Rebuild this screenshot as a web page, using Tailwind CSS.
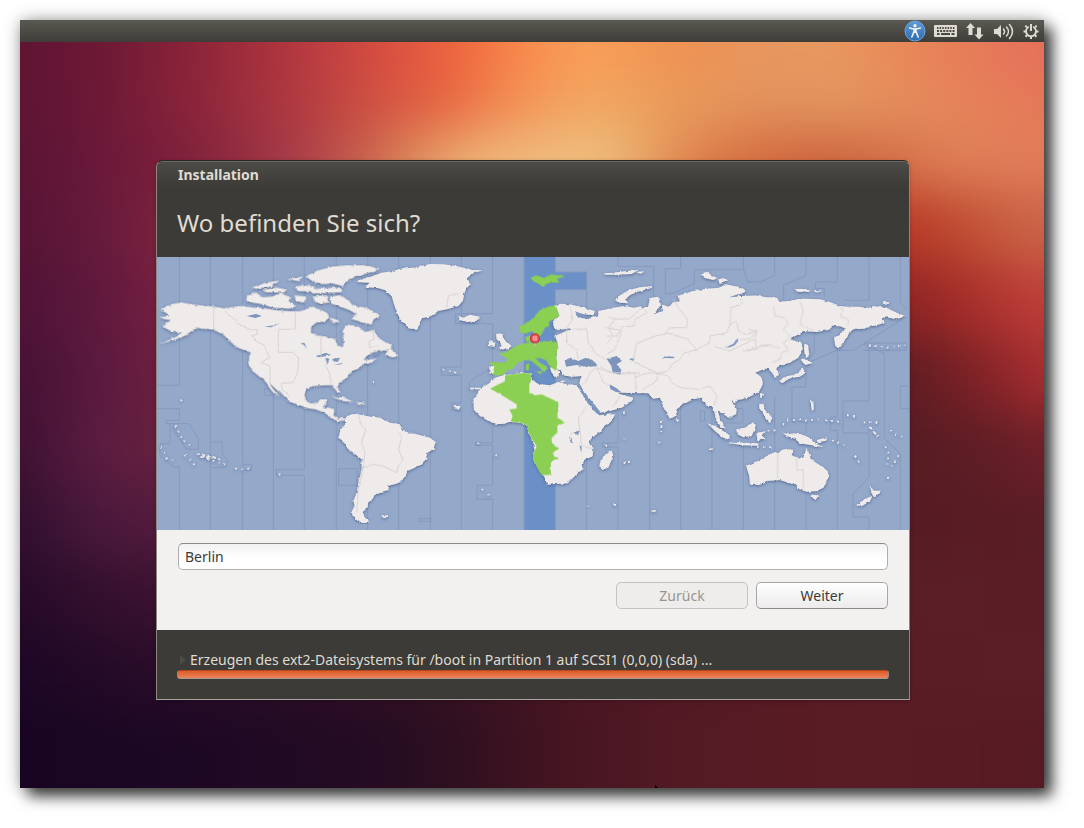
<!DOCTYPE html>
<html lang="de">
<head>
<meta charset="utf-8">
<meta name="viewport" content="width=device-width, initial-scale=1">
<title>Installation</title>
<script src="https://cdn.jsdelivr.net/npm/@tailwindcss/browser@4"></script>
</head>
<body class="flex min-h-screen bg-white pt-5 pr-10 pb-10 pl-5 font-['Noto_Sans',sans-serif] text-sm">
<div class="relative isolate flex flex-1 flex-col shadow-[8px_8px_14px_rgba(0,0,0,0.75),0_0_16px_rgba(0,0,0,0.3)]">

  <!-- wallpaper: soft colour bands blended into each other -->
  <div class="absolute inset-0 -z-10 overflow-hidden bg-[#5a1c24]" aria-hidden="true">
    <div class="absolute -inset-x-0 -top-12 -bottom-12 flex flex-col blur-[24px]">
      <div class="-mx-12 h-[110px] bg-[linear-gradient(90deg,#5f1433_4%,#6b1835_11%,#8c2439_20%,#b33840_29%,#dd5240_38%,#f0683f_44%,#f88a4c_49%,#f9a05a_55%,#ee9252_63%,#e89660_71%,#e8985f_77%,#e88858_83%,#e5725a_94%)]"></div>
      <div class="-mx-12 h-[50px] bg-[linear-gradient(90deg,#5e1434_4%,#6b1836_11%,#8c243b_20%,#b03a40_29%,#d85843_38%,#e86a43_43%,#f18a52_47%,#f3a461_53%,#f0a863_56%,#e99a5b_63%,#e1905e_72%,#e39560_78%,#e5865a_87%,#e57858_96%)]"></div>
      <div class="-mx-12 h-[60px] bg-[linear-gradient(90deg,#5a1434_4%,#69183a_11%,#80213b_20%,#a83c4a_29%,#c8604c_35%,#e0925f_40%,#efb478_45%,#efbe80_53%,#eebe7c_57%,#e39458_62%,#d97545_67%,#cf673f_74%,#cd6840_79%,#d6724a_83%,#de8058_88%,#e27c5b_96%)]"></div>
      <div class="-mx-12 flex-1 bg-[linear-gradient(90deg,#561334_4%,#641a3b_11%,#7d203e_17%,#a84048_28%,#d8805c_36%,#efc08a_45%,#eeb878_54%,#d9703f_62%,#c0442a_72%,#b83a28_84%,#bf4a30_88%,#c65c3e_92%,#cc664a_96%)]"></div>
      <div class="-mx-12 flex-1 bg-[linear-gradient(90deg,#4e1235_4%,#601a3e_12%,#7a2040_18%,#9c3548_30%,#c05040_50%,#8a2424_75%,#8e2425_84%,#a32c28_88%,#b23531_92%,#c0403a_96%)]"></div>
      <div class="-mx-12 flex-1 bg-[linear-gradient(90deg,#451133_4%,#5c1b40_12%,#70203f_18%,#702038_50%,#5a1c22_78%,#5f1d23_84%,#701f24_87%,#8c2529_92%,#ab2f31_96%)]"></div>
      <div class="-mx-12 flex-1 bg-[linear-gradient(90deg,#3c1030_4%,#571b40_10%,#68203f_17%,#581c30_50%,#551b22_80%,#571c23_84%,#621e26_92%,#74202a_97%)]"></div>
      <div class="-mx-12 flex-1 bg-[linear-gradient(90deg,#300e2d_4%,#4a193c_11%,#541b3c_17%,#50182a_50%,#571b23_85%,#5a1d25_96%)]"></div>
      <div class="-mx-12 flex-1 bg-[linear-gradient(90deg,#250a28_4%,#3a1230_15%,#3c1028_50%,#5b1e26_84%,#5a1d25_97%)]"></div>
      <div class="-mx-12 flex-1 bg-[linear-gradient(90deg,#1c0725_4%,#280c28_15%,#2e0e26_30%,#351122_42%,#4a1622_54%,#571a24_72%,#5c1e26_96%)]"></div>
      <div class="-mx-12 h-[130px] bg-[linear-gradient(90deg,#170521_4%,#1b0724_16%,#230b23_34%,#2b0f20_42%,#451421_52%,#551b24_65%,#5a1b24_80%,#561a22_96%)]"></div>
    </div>
  </div>

  <header class="flex h-[22px] items-center justify-end gap-2 bg-linear-to-b from-[#5a5951] to-[#3e3d39] pr-[5px]">
    <button type="button" aria-label="Zugangshilfen" class="block">
      <svg class="block h-[22px] w-[22px]" viewBox="0 0 22 22"><defs><linearGradient id="acc" x2="0" y2="1"><stop stop-color="#5b9bd8"/><stop offset="1" stop-color="#2f6cb0"/></linearGradient></defs><circle cx="11" cy="11" r="10" fill="url(#acc)" stroke="#6da6da"/><g fill="none" stroke="#f1f0ec" stroke-linecap="round"><path d="M5.500 8 11 9.200 16.500 8" stroke-width="1.500"/><path d="M9.800 12 7.800 17M12.200 12l2 5" stroke-width="1.600"/></g><path d="M9.300 8.500h3.400v4.500H9.300z" fill="#f1f0ec"/><circle cx="11" cy="5.800" r="1.700" fill="#f1f0ec"/></svg>
    </button>
    <button type="button" aria-label="Tastatur" class="block">
      <svg class="block h-[22px] w-[23px]" viewBox="0 0 23 22"><rect y="5" width="23" height="12" rx="1" fill="#dfdbd2"/><g stroke="#4a4943" stroke-width="2"><path d="M3 8H20.500" stroke-dasharray="1.500 1.150"/><path d="M3 11H20.500" stroke-dasharray="2 1.100"/><path d="M3 14H5.500M7 14h9M17.500 14H20.500"/></g></svg>
    </button>
    <button type="button" aria-label="Netzwerk" class="block">
      <svg class="block h-[22px] w-[20px]" viewBox="0 0 20 22" fill="#dfdbd2"><path d="M5.500 3 10 8H7.500v7h-4V8H1zM14 19.500l4.500-5H16v-7h-4v7H9.500z"/></svg>
    </button>
    <button type="button" aria-label="Lautstärke" class="block">
      <svg class="block h-[22px] w-[22px]" viewBox="0 0 22 22"><path d="M1 9h3l4-4v13l-4-4H1z" fill="#dfdbd2"/><g fill="none" stroke="#dfdbd2" stroke-width="1.500" stroke-linecap="round"><path d="M10.500 9q2 2.500 0 5"/><path d="M13.500 7q4 4.500 0 9"/><path d="M16.500 4.500q6 7 0 14"/></g></svg>
    </button>
    <button type="button" aria-label="System" class="block">
      <svg class="block h-[22px] w-[16px]" viewBox="0 0 16 22" fill="none" stroke="#dfdbd2"><path d="M5.800 6.700a5 5 0 1 0 4.400 0" stroke-width="1.800"/><path d="M8 4v7" stroke-width="2"/><path d="m3.900 7.200-1.600-1.600M12.100 7.200l1.600-1.600M3 11.500H.5M13 11.500h2.500M4.200 15l-1.700 1.700M11.800 15l1.700 1.700M8 16.500V19" stroke-width="2"/></svg>
    </button>
  </header>

  <main class="flex flex-1 flex-col items-center justify-center pt-[30px] pr-6 pl-[26px]">
    <section aria-labelledby="question" class="flex w-full max-w-[754px] flex-col rounded-t-[7px] border border-t-[#292824] border-b-[#a8a49c] border-x-[#8c8880] bg-[#3c3b37] text-[#dfdbd2] shadow-[0_1px_4px_rgba(0,0,0,0.2)]">
      <div class="flex h-[26px] items-center rounded-t-md border-t border-[#6a6961] bg-linear-to-b from-[#4c4b46] to-[#3c3b37] px-[21px] text-sm font-bold">Installation</div>
      <h1 id="question" class="flex h-[70px] items-center px-5 pt-[2px] text-2xl font-normal">Wo befinden Sie sich?</h1>

      <svg class="block w-full" viewBox="0 0 2256 819" role="img" aria-label="Zeitzonenkarte">
        <defs>
          <filter id="coast" x="0" y="0" width="100%" height="100%"><feTurbulence type="fractalNoise" baseFrequency=".08" numOctaves="2" seed="4" result="n"/><feDisplacementMap in="SourceGraphic" in2="n" scale="9" xChannelSelector="R" yChannelSelector="G" result="d"/><feDropShadow in="d" dx="0" dy="3" stdDeviation="5" flood-color="#3f5682" flood-opacity=".8"/></filter>
          <filter id="edge" x="0" y="0" width="100%" height="100%"><feTurbulence type="fractalNoise" baseFrequency=".08" numOctaves="2" seed="4" result="n"/><feDisplacementMap in="SourceGraphic" in2="n" scale="7" xChannelSelector="R" yChannelSelector="G"/></filter>
        </defs>
        <rect width="2256" height="819" fill="#94a8ca"/>
        <path fill="#6b90c7" d="M1101 0h94v45h94v53h-94v721h-94z"/>
        <!-- time zone boundaries -->
        <g fill="none" stroke="#8799bd" stroke-width="3">
          <path d="M67 0V385H0M0 455H67V490H27V500H39V560H9V597L50 629H67V819M39 500H97L124 545V577H88L45 510M160 0V819M160 555H196V590L214 615 204 632H160M257 0V819M257 622H284V640H257M349 0V819M442 0V638H358V655H442V819M538 0V819M632 0V819M725 0V819M820 0V819M913 0V330H853V355H913V438H883V460H913V819M1007 0V170H895V200H1007V330L937 375V400M1007 340V558H955V565H1007V685H960V727H1007V819M1101 0V819M1195 0V45H1289V98H1195V819M1289 98V819M1383 0V28H1490V120M1383 400V558H1335V570H1383V819M1478 400V819M1571 0V35H1525V110H1545L1612 80V38H1760M1571 430V819M1665 430V819M1630 462H1643V492H1630ZM1759 0V35L1772 75H1812L1853 55V0M1759 560V819M1853 420V819M1947 0V55L1880 85V130M1972 200V285L1947 320V390H1905V495H1947V530M1947 700V819M2041 0V75H1975V95H2002V120M2041 270V480H2020V520H2041V819M1947 320 2040 280H2090L2230 190M2136 0V130H2060M2136 270V432H2058V528H2136V660L2088 710V780H2136V819M2120 260 2182 290V545L2230 590V819M2230 0V140L2250 160M2256 387H2230V455H2256M322 395H350V415H322ZM545 635H600V685H545ZM785 785H825V793H785ZM2120 258H2248V280H2120M1720 455H1758V498H1705"/>
        </g>

        <g filter="url(#coast)" fill="#efebea">
          <!-- North America and the Arctic islands -->
          <g transform="translate(-3 -3)">
            <path d="M12 162 42 146 75 139 110 146 172 152 203 157 240 152 262 150 290 155 330 158 360 163 400 166 432 166 450 160 470 152 490 160 512 170 520 182 508 195 480 200 466 212 464 228 482 238 520 244 538 250 545 268 560 274 563 258 562 240 560 225 572 205 607 212 627 228 652 222 667 245 687 258 707 265 705 278 682 284 652 288 632 300 622 312 647 310 662 306 647 320 622 322 612 335 582 350 572 368 552 380 544 392 552 410 544 408 534 395 527 387 500 388 470 390 450 398 445 415 450 435 465 443 485 440 492 430 512 430 505 448 500 455 520 455 535 460 532 478 545 488 567 487 567 493 545 495 530 488 505 470 480 460 455 456 430 447 400 436 390 422 370 408 350 390 338 378 350 398 370 421 352 410 335 388 325 370 310 362 290 345 278 325 280 300 285 290 265 282 245 275 225 258 205 238 190 230 172 221 140 218 120 215 100 230 75 245 40 256 5 264 40 252 65 240 78 230 60 228 45 225 25 215 20 208 35 200 45 192 30 190 10 183 40 180 30 170Z"/>
            <path d="M448 62 490 42 530 32 570 28 620 28 672 38 640 50 600 60 575 75 560 90 530 82 500 84 470 75ZM275 118 300 110 320 124 350 122 375 112 404 125 400 138 420 150 400 158 350 155 320 144 290 140 270 132ZM288 94 330 80 370 74 345 92 300 98ZM320 102 360 95 392 100 385 110 330 108ZM395 70 440 62 430 75ZM420 92 440 88 475 92 470 105 425 105ZM415 118 450 122 450 140 420 135ZM458 100 550 95 562 108 470 112ZM470 122 510 118 520 140 480 142ZM522 122 550 118 575 130 592 150 632 155 652 168 674 178 652 190 647 206 617 198 585 188 602 175 582 162 552 152 525 142ZM524 185 552 195 530 202ZM687 298 700 275 727 298 712 304ZM527 422 562 425 592 437 562 435ZM600 437 630 442 612 447Z"/>
          </g>
          <!-- Greenland, Iceland, South America -->
          <g transform="translate(519 -3)">
            <path d="M80 78 100 68 130 60 155 50 190 45 210 38 250 35 300 24 340 25 380 30 400 35 430 42 458 43 430 52 412 65 420 85 408 100 402 115 398 135 385 150 350 160 325 165 300 182 280 185 268 205 262 219 240 218 225 205 210 190 200 165 192 145 185 120 165 102 140 96 105 92 120 80ZM385 180 400 185 420 176 448 182 440 194 410 198 390 192Z"/>
            <path d="M45 490 60 475 80 474 110 480 150 485 180 500 210 505 220 525 260 535 300 545 317 558 310 580 292 590 288 610 270 628 232 645 225 665 205 682 172 690 178 702 150 708 130 720 128 732 115 738 112 755 98 768 105 785 122 799 100 802 80 792 68 780 65 765 75 752 70 735 80 710 85 680 95 640 95 610 70 590 50 575 40 555 25 545 32 520 45 510Z"/>
            <path d="M155 778h16v5h-16zM370 450h22l-6 12zM338 340h5v5h-5zM355 344h8v5h-8zM372 347h7v5h-7zM420 395h32v5h-32zM442 560h6v4h-6zM496 596h5v5h-5zM455 698h5v5h-5zM473 714h5v5h-5zM127 376h5v5h-5z"/>
          </g>
          <!-- Europe, Africa, Middle East -->
          <g transform="translate(939 -3)">
            <path d="M78 234 95 232 102 250 125 270 112 280 85 280 95 265 80 250ZM50 270 60 252 76 258 74 272ZM58 330 75 330 70 356 58 352ZM388 630 395 605 425 583 430 600 415 635 395 643ZM400 52l30-2 35-4 40-4-20 12-70 2z"/>
            <path d="M65 370 85 362 105 358 150 352 185 352 185 372 210 385 240 388 265 378 290 385 320 388 330 402 345 428 360 448 372 465 388 478 435 475 425 495 400 515 380 535 362 550 358 565 370 575 368 600 345 612 335 625 338 640 320 655 305 670 290 682 260 684 232 686 222 660 208 645 190 610 192 590 195 570 180 545 172 520 175 508 150 500 120 497 90 506 60 498 30 480 12 462 10 430 25 405 45 390 60 380Z"/>
            <path d="M255 147 275 143 300 145 340 155 375 165 370 178 345 175 330 182 355 190 385 178 395 165 440 160 480 158 515 150V412L470 410 445 398 425 388 430 400 450 415 490 425 478 440 455 455 420 465 388 470 375 450 355 425 338 400 328 382 335 360 305 362 280 358 268 340 258 335 268 348 260 366 245 350 240 335 258 320 262 258 255 240 300 220 262 222 250 210 250 195 268 180 262 162Z"/>
            <path d="M460 466h7v5h-7zM403 566h6v4h-6zM461 545h6v5h-6zM461 619h6v5h-6zM474 615h6v5h-6zM350 749h8v4h-8zM430 744h8v5h-8zM270 376l18-2-12 6z"/>
          </g>
          <!-- Russia, central and southern Asia -->
          <g transform="translate(1329 -3)">
            <path d="M-5 165 40 155 75 150 100 155 125 158 145 150 150 125 175 122 180 150 162 174 190 165 185 145 205 152 215 140 240 136 232 120 280 105 320 98 360 95 375 85 415 92 440 105 410 120 450 120 515 125V336L495 338 465 350 480 360 488 375 485 395 465 415 440 425 415 430 395 434 400 445 410 460 408 475 385 485 365 470 353 462 360 490 377 517 365 515 350 495 342 465 335 450 320 450 305 425 280 430 250 445 230 460 226 480 210 490 200 470 185 440 180 425 160 428 145 412 110 410 80 410 50 410-5 408Z"/>
            <path d="M48 135 60 118 85 103 120 94 155 90 155 96 120 105 92 116 75 130 85 142 60 140ZM300 58 320 47 335 58 352 66 340 72 315 66ZM350 72 370 66 385 73 360 80ZM10 54l18-3-4 6zM36 52l20-2 6 5-16 3zM70 50l22-4 2 6-18 3zM108 48l26-2-12 7zM227 485 238 494 232 502ZM398 432 416 430 404 442ZM322 502 345 510 385 535 390 552 370 545 345 525ZM388 556 430 560 475 562 475 569 430 568 392 562ZM408 520 435 515 462 497 468 510 455 540 430 544 412 535ZM474 530 498 525 485 536 496 550 484 545 478 554ZM478 445 490 445 488 462 496 470 478 462ZM480 412l8 2-6 12z"/>
            <path d="M180 495h5v6h-5zM182 508h5v8h-5zM181 522h5v6h-5zM176 557h5v4h-5zM329 577h6v5h-6zM155 763h12v4h-12z"/>
          </g>
          <!-- Pacific side: Siberia, Japan, Australia, New Zealand -->
          <g transform="translate(1749 -3)">
            <path d="M-5 125 15 120 60 118 80 125 110 122 118 138 160 132 190 128 240 130 270 138 300 150 320 152 360 152 380 158 400 150 440 155 470 170 497 180 470 190 440 184 425 190 435 200 400 210 370 218 345 218 330 225 320 247 295 277 286 270 282 245 300 235 318 218 300 211 280 210 265 222 230 228 190 225 170 238 150 250 185 262 188 280 175 305 150 320 130 325 108 335 117 355 108 366 95 350 88 340 70 335 45 350 65 365 68 385 50 410 20 425-5 432Z"/>
            <path d="M193 262 204 268 208 300 198 306 192 280ZM183 312 200 311 217 320 195 328ZM186 332 196 350 180 362 152 366 125 381 118 374 145 360 175 352ZM18 630 60 612 90 595 105 588 115 592 125 582 140 578 160 582 155 598 180 608 190 605 195 590 198 575 208 590 212 610 240 628 265 650 268 665 250 695 230 705 200 707 178 700 165 685 150 682 120 672 80 675 60 685 30 688 28 660ZM212 716 236 718 225 734ZM388 688 402 704 423 704 405 724 396 712ZM348 748 375 728 397 720 390 735 365 751ZM128 530 145 535 160 532 185 535 215 548 225 560 248 573 215 568 180 562 165 548 140 540ZM58 445 70 443 75 462 97 485 90 502 78 490 66 465ZM60 412 70 414 62 426ZM165 98 212 100 200 110 170 106ZM222 102 250 105 226 109ZM425 138 450 139 440 144ZM230 552l32-8-8 10-20 6zM50 532 75 528 65 540 76 550 60 548 52 556ZM210 432l10 4 2 24-6 4z"/>
          </g>
          <!-- island chains -->
          <g fill="none" stroke="#efebea" stroke-width="5" stroke-dasharray="5 13">
            <path d="M55 505 75 545 98 565M10 570 32 605 55 612M85 593 118 630M150 605 205 622M235 635H280M365 650H375M70 430H84"/>
            <path stroke-dasharray="10 7" d="M118 590 158 597 190 607M130 600 180 603"/>
            <path d="M2136 264 2190 272 2245 264M1890 490 1985 488M2005 490 2060 495M2070 475 2100 477M2120 496 2170 495M2200 520 2240 543M2185 568 2195 590 2190 630M2225 595 2205 628M2195 660 2185 670M1880 500V515M2025 550 2075 572M2095 595 2110 622M1855 520H1830M1800 570H1850M2140 515 2160 535"/>
            <path stroke-dasharray="12 5" d="M2137 510 2162 538"/>
          </g>
        </g>

        <!-- inland seas and lakes -->
        <g filter="url(#edge)" fill="#7d95bd">
          <path transform="translate(-3 -3)" d="M272 180 300 174 318 180 298 186ZM322 212 345 209 372 202 345 214ZM435 262 445 260 452 278ZM482 300 510 290 525 298 490 304ZM508 305 520 308 514 328ZM528 308 552 305 545 318 532 316ZM532 328 560 320 556 325ZM648 296 675 290 670 302 652 305Z"/>
          <path transform="translate(939 -3)" d="M288 332 284 312 302 305 325 315 345 306 362 308 378 322 380 331 350 333 320 327ZM410 308 440 300 456 315 440 325 454 342 450 356 428 350 424 330ZM312 165 350 178 340 188 320 180ZM416 383 440 397 456 410 438 408 422 400ZM320 386 334 397 391 468 382 474 355 442 335 412ZM312 526 330 525 322 538ZM297 540 310 560 302 560ZM328 568 335 572 334 590ZM246 225 300 217 300 222 258 230Z"/>
          <path transform="translate(1329 -3)" d="M88 310 103 306 100 315ZM186 308 195 301 222 302 222 307 196 306ZM376 275 400 263 410 249 415 254 404 268 390 274ZM388 124 412 115 432 114 410 122Z"/>
        </g>

        <!-- zone boundaries on land -->
        <g filter="url(#edge)" fill="none" stroke="#d3cfce" stroke-width="2.500" stroke-linejoin="round">
          <path transform="translate(-3 -3)" d="M173 152V220M203 158 215 175 232 185 250 205 285 222 303 220V235L290 238 295 252 325 268 340 305 315 320 342 330V380M418 165V220H367V289H410L428 305 425 350 410 380 375 382 378 400 400 420M495 240V305M508 328 520 350 525 388M650 222 655 250 640 255 640 275 665 270"/>
          <path transform="translate(519 -3)" d="M85 475 95 510 108 520 95 560 105 590 100 635 85 700 80 770M100 635 130 625 160 630 200 650 205 630 218 610 205 580 215 545 205 530M350 155 355 120 385 112"/>
          <path transform="translate(939 -3)" d="M300 145 308 190 290 215 290 260 318 280 325 308M308 220 350 218 355 260 378 295 410 310M415 182 435 190 415 215 430 240 410 262M435 190 480 188 510 160M335 385 350 375 360 350 380 335M380 335 400 380 420 390M350 450 325 490 330 520 300 535M330 520 335 570 370 578M380 335 410 345 450 355 510 350M430 450 450 420"/>
          <path transform="translate(1329 -3)" d="M135 160 140 170 105 190 102 210 65 212 60 240 45 280 20 295M15 215 60 222 50 240 20 240M100 310 110 262 165 240 205 232 260 248 290 280 250 292 240 310 215 325 205 345 175 352 105 320M195 232 210 215 260 215 262 190 235 155 220 130M0 330 30 350 105 350 108 405M105 365 140 350 175 352 170 375 130 400M175 352 205 360 215 380 240 395 300 400 330 390 350 420 342 450M290 280 330 260 330 240 380 230 390 205 410 195 415 225 440 235 470 225 465 250 430 265 390 285 345 272M390 205 392 155 425 145 425 125M465 250 470 280 430 285 510 265"/>
          <path transform="translate(1749 -3)" d="M100 150 105 180 135 185 145 205 130 220 150 240 130 262 145 282 125 290 120 310 95 320M180 135 190 165 180 205 222 225M300 150 310 165 300 180 325 190 325 210M0 250 30 250 50 225 25 220M113 592V670M170 605V642H190V705M60 265 120 275"/>
        </g>

        <!-- selected zone -->
        <g filter="url(#edge)" fill="#8bd053"><g transform="translate(939 -3)">
          <path d="M60 398 105 375 105 358 150 352 182 352 184 372 178 385 178 408 195 418 215 415 265 438 265 460 262 485 287 500 262 508 262 530 245 545 245 560 268 578 250 588 252 602 272 606 250 612 243 620 242 657 215 657 205 640 190 612 192 590 200 570 182 545 172 520 175 508 150 500 122 497 128 480 118 460 140 458 140 445 100 420Z"/>
          <path d="M85 292 105 290 130 275 150 265 175 260 195 262 225 255 262 258 265 275 258 300 262 320 258 345 245 335 235 325 228 312 210 308 195 305 215 322 234 338 222 348 205 332 185 315 165 312 140 322 130 338 110 345 100 357 80 358 66 355 74 330 60 326 62 318 108 320 112 308 95 298ZM146 210 165 205 190 185 210 162 235 152 257 147 262 162 268 180 248 192 235 195 238 210 225 215 215 235 205 247 195 240 188 225 165 232 150 228ZM165 242 182 238 180 258 168 256ZM168 325 178 323 176 342 168 342ZM195 346 218 346 212 354ZM182 65 200 58 222 66 240 55 285 60 260 70 270 80 240 80 218 93 205 82 190 76ZM146 530 154 532 150 537Z"/>
        </g></g>
        <g transform="translate(1134 244)">
          <path d="M-3 12h6L1 26h-2z" fill="#d8d4d2" stroke="#999" stroke-width="1"/>
          <circle r="13" fill="#f0686a" stroke="#cc2430" stroke-width="4"/>
          <path d="M-6-4H6M-6 3H6" stroke="#f9b0ac" stroke-width="4"/>
        </g>
      </svg>

      <form class="flex flex-col gap-3 bg-[#f2f1f0] px-[21px] pt-[13px] pb-[21px] text-[#3c3b37]">
        <input type="text" aria-label="Ort" value="Berlin" class="h-[27px] w-full rounded-[5px] border border-[#b0aeab] border-t-[#8c8b88] bg-linear-to-b from-[#f3f2f2] to-white to-60% px-1.5 text-sm">
        <div class="flex justify-end gap-2">
          <button type="button" disabled class="h-[27px] w-[132px] rounded-[5px] border border-[#c5c3c1] bg-[#eeedec] text-sm text-[#97958f]">Zurück</button>
          <button type="button" class="h-[27px] w-[132px] rounded-[5px] border border-[#a9a7a4] border-b-[#8a8987] bg-linear-to-b from-white to-[#edebeb] text-sm">Weiter</button>
        </div>
      </form>

      <div class="flex flex-col px-5 pt-5 pb-5">
        <div class="flex h-5 items-center gap-1 pl-[3px]">
          <svg class="block h-2.5 w-[6px]" viewBox="0 0 6 10"><path d="M0 0 6 5 0 10z" fill="#4d4c48"/></svg>
          <span id="status" class="whitespace-nowrap">Erzeugen des ext2-Dateisystems für /boot in Partition 1 auf SCSI1 (0,0,0) (sda) ...</span>
        </div>
        <div role="progressbar" aria-labelledby="status" class="h-[9px] w-full rounded-[3px] border border-t-[#b5471f] border-x-[#9c8377] border-b-[#a39a92] bg-linear-to-b from-[#dd5a26] to-[#ec8359]"></div>
      </div>
    </section>
  </main>
  <svg class="absolute bottom-0 left-[62%] h-[3px] w-[3px]" viewBox="0 0 3 3" aria-hidden="true"><path d="M0 0 3 3H0z" fill="#000"/></svg>
</div>
</body>
</html>
